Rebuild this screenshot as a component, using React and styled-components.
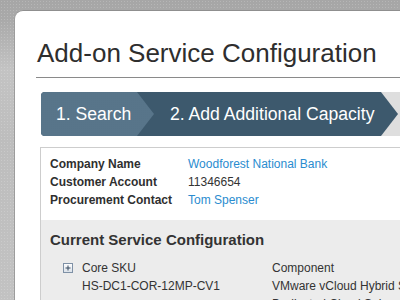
import React from 'react';
import styled, { createGlobalStyle } from 'styled-components';

const GlobalStyle = createGlobalStyle`
  html, body {
    margin: 0;
    padding: 0;
  }
  body {
    font-family: "Liberation Sans", Arial, sans-serif;
    background: #b4b4b4;
  }
`;

const dots = (c) => `radial-gradient(${c} 0.7px, transparent 0.9px)`;

const Page = styled.div`
  width: 400px;
  height: 300px;
  overflow: hidden;
  box-sizing: border-box;
  padding: 10px 0 0 14px;
  background-image: ${dots('rgba(255,255,255,0.18)')},
    linear-gradient(180deg, #a6a6a6 0px, #a9a9a9 20px, #c3c3c3 70px, #bdbdbd 140px, #c2c2c2 300px);
  background-size: 3px 3px, 100% 100%;
`;

const Card = styled.div`
  width: 520px;
  min-height: 320px;
  background: #fff;
  border-top: 1px solid #8f8f8f;
  border-left: 1px solid #9c9c9c;
  border-radius: 9px 0 0 0;
  padding-left: 21px;
  box-sizing: border-box;
`;

const Header = styled.div`
  padding: 27px 0 9px 1px;
  border-bottom: 1px solid #8a8a8a;
`;

const Title = styled.h1`
  margin: 0;
  font-size: 26px;
  line-height: 30px;
  font-weight: normal;
  color: #2e2e2e;
`;

const Track = styled.div`
  margin: 14px 0 0 5px;
  height: 44px;
  display: flex;
  background-color: #f0f0f0;
  background-image: ${dots('rgba(0,0,0,0.08)')};
  background-size: 2px 2px;
  border-radius: 4px 0 0 4px;
`;

const Bar = styled.div`
  width: 357px;
  height: 100%;
  display: flex;
  align-items: center;
  background-color: #2d4c61;
  background-image: ${dots('rgba(255,255,255,0.08)')};
  background-size: 2px 2px;
  border-radius: 4px 0 0 4px;
  clip-path: polygon(0 0, calc(100% - 17px) 0, 100% 50%, calc(100% - 17px) 100%, 0 100%);
`;

const Step = styled.div`
  height: 100%;
  display: flex;
  align-items: center;
  box-sizing: border-box;
  font-size: 17.6px;
  color: #fff;
  white-space: nowrap;
  padding-left: ${(p) => (p.$first ? '15px' : '16px')};
  ${(p) =>
    p.$first &&
    `
    width: 113px;
    flex: none;
    background-color: #42637a;
    background-image: radial-gradient(rgba(255,255,255,0.12) 0.7px, transparent 0.9px);
    background-size: 2px 2px;
    border-radius: 4px 0 0 4px;
    clip-path: polygon(0 0, calc(100% - 17px) 0, 100% 50%, calc(100% - 17px) 100%, 0 100%);
  `}
`;

const InfoBox = styled.div`
  margin: 11px 0 0 4px;
  border-top: 1px solid #cdcdcd;
  border-left: 1px solid #cdcdcd;
  font-size: 12px;
  line-height: 18px;
  color: #333;
`;

const Details = styled.div`
  display: grid;
  grid-template-columns: 138px 1fr;
  padding: 7px 0 11px 9px;
`;

const Label = styled.div`
  font-weight: bold;
  color: #2f2f2f;
`;

const Value = styled.div`
  color: ${(p) => (p.$link ? '#2a8ccf' : '#333')};
`;

const Section = styled.div`
  background: #ececec;
  padding: 11px 0 20px 9px;
`;

const SectionTitle = styled.h2`
  margin: 0;
  font-size: 15px;
  line-height: 18px;
  font-weight: bold;
  color: #333;
`;

const Table = styled.div`
  margin-top: 10px;
  padding-left: 13px;
  display: grid;
  grid-template-columns: 19px 190px 1fr;
  white-space: nowrap;
`;

const Expand = styled.span`
  width: 10px;
  height: 10px;
  align-self: center;
  display: flex;
`;

const PlusIcon = () => (
  <svg width="10" height="10" viewBox="0 0 10 10">
    <defs>
      <linearGradient id="pg" x1="0" y1="0" x2="0" y2="1">
        <stop offset="0" stopColor="#ffffff" />
        <stop offset="1" stopColor="#d9e0e8" />
      </linearGradient>
    </defs>
    <rect x="0.5" y="0.5" width="9" height="9" fill="url(#pg)" stroke="#7f91a6" />
    <path d="M2.5 5h5M5 2.5v5" stroke="#34495f" strokeWidth="1" />
  </svg>
);

const rows = [
  { expand: true, left: 'Core SKU', right: 'Component' },
  { left: 'HS-DC1-COR-12MP-CV1', right: 'VMware vCloud Hybrid Service' },
  { left: '', right: 'Dedicated Cloud Subscription' },
];

const App = () => (
  <>
    <GlobalStyle />
    <Page>
      <Card>
        <Header>
          <Title>Add-on Service Configuration</Title>
        </Header>
        <Track>
          <Bar>
            <Step $first>1. Search</Step>
            <Step>2. Add Additional Capacity</Step>
          </Bar>
        </Track>
        <InfoBox>
          <Details>
            <Label>Company Name</Label>
            <Value $link>Woodforest National Bank</Value>
            <Label>Customer Account</Label>
            <Value>11346654</Value>
            <Label>Procurement Contact</Label>
            <Value $link>Tom Spenser</Value>
          </Details>
          <Section>
            <SectionTitle>Current Service Configuration</SectionTitle>
            <Table>
              {rows.map((r, i) => (
                <React.Fragment key={i}>
                  {r.expand ? (
                    <Expand>
                      <PlusIcon />
                    </Expand>
                  ) : (
                    <span />
                  )}
                  <div>{r.left}</div>
                  <div>{r.right}</div>
                </React.Fragment>
              ))}
            </Table>
          </Section>
        </InfoBox>
      </Card>
    </Page>
  </>
);

export default App;
